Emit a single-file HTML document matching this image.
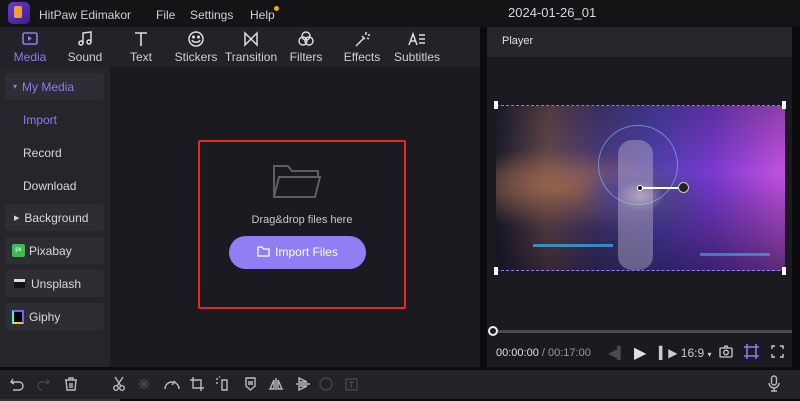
<!DOCTYPE html><html><head><style>
*{margin:0;padding:0;box-sizing:border-box}
body{width:800px;height:401px;overflow:hidden;background:#0b0b0d;font-family:"Liberation Sans",sans-serif;position:relative;color:#d8d8dc}
.a{position:absolute}
.tb span{font-size:12px;color:#cfcfd4}
.tool{position:absolute;top:30px;width:60px;text-align:center;font-size:12px;color:#d0d0d5}
.tool svg{display:block;margin:0 auto 2px;width:18px;height:18px}
.si{position:absolute;left:5px;width:99px;height:27px;border-radius:4px;background:#2d2d34;font-size:12px;color:#d8d8dc;display:flex;align-items:center}
.sl{position:absolute;left:23px;font-size:12px;color:#d8d8dc}
</style></head><body>
<div class="a" style="left:0;top:0;width:800px;height:27px;background:#141417"></div>
<div class="a" style="left:8px;top:2px;width:22px;height:22px;border-radius:5px;background:linear-gradient(135deg,#6a3ad8,#3a1f8a)"></div>
<div class="a" style="left:14px;top:6px;width:8px;height:12px;background:#f0a030;border-radius:2px"></div>
<div class="a tb" style="left:39px;top:6px"><span>HitPaw Edimakor</span></div>
<div class="a tb" style="left:156px;top:6px"><span>File</span></div>
<div class="a tb" style="left:190px;top:6px"><span>Settings</span></div>
<div class="a tb" style="left:250px;top:6px"><span>Help</span></div>
<div class="a" style="left:274px;top:6px;width:5px;height:5px;border-radius:50%;background:#f5a623"></div>
<div class="a" style="left:508px;top:5px;font-size:13px;color:#d8d8dc">2024-01-26_01</div>
<div class="a" style="left:0;top:27px;width:480px;height:39px;background:#222228"></div>
<div class="tool" style="left:0;color:#8e7cf0"><svg viewBox="0 0 18 18"><rect x="2" y="3" width="14" height="11" rx="1.5" fill="none" stroke="#8e7cf0" stroke-width="1.6"/><path d="M7 6l4 2.5-4 2.5z" fill="#8e7cf0"/></svg>Media</div>
<div class="tool" style="left:55px"><svg viewBox="0 0 18 18" fill="none" stroke="#ddd" stroke-width="1.5"><path d="M7 13V3l8-1v10"/><circle cx="5" cy="13" r="2"/><circle cx="13" cy="12" r="2"/></svg>Sound</div>
<div class="tool" style="left:111px"><svg viewBox="0 0 18 18" fill="none" stroke="#ddd" stroke-width="1.6"><path d="M3 3h12M9 3v13"/></svg>Text</div>
<div class="tool" style="left:166px"><svg viewBox="0 0 18 18" fill="none" stroke="#ddd" stroke-width="1.5"><circle cx="9" cy="9" r="7"/><path d="M5 10c1 3 7 3 8 0"/><circle cx="6.5" cy="7" r=".8"/><circle cx="11.5" cy="7" r=".8"/></svg>Stickers</div>
<div class="tool" style="left:221px"><svg viewBox="0 0 18 18" fill="none" stroke="#ddd" stroke-width="1.5"><path d="M3 3v12l12-12v12z"/></svg>Transition</div>
<div class="tool" style="left:276px"><svg viewBox="0 0 18 18" fill="none" stroke="#ddd" stroke-width="1.4"><circle cx="9" cy="6" r="4"/><circle cx="6" cy="11" r="4"/><circle cx="12" cy="11" r="4"/></svg>Filters</div>
<div class="tool" style="left:332px"><svg viewBox="0 0 18 18" fill="none" stroke="#ddd" stroke-width="1.5"><path d="M3 16l8-8M9 6l3 3M13 2v3M15 5h2M14 8l2 1"/></svg>Effects</div>
<div class="tool" style="left:387px"><svg viewBox="0 0 18 18" fill="none" stroke="#ddd" stroke-width="1.5"><path d="M1 15l4-11 4 11M2.5 11h5M11 5h6M11 9h6M11 13h6"/></svg>Subtitles</div>
<div class="a" style="left:0;top:66px;width:110px;height:301px;background:#25252b"></div>
<div class="a" style="left:110px;top:66px;width:370px;height:301px;background:#1a1a20"></div>
<div class="si" style="top:73px;color:#8e7cf0"><span style="font-size:8px;margin:0 5px 0 8px">▾</span>My Media</div>
<div class="sl" style="top:113px;color:#8e7cf0">Import</div>
<div class="sl" style="top:146px">Record</div>
<div class="sl" style="top:179px">Download</div>
<div class="si" style="top:204px"><span style="font-size:7px;margin:0 5px 0 9px">▶</span>Background</div>
<div class="si" style="top:237px"><span style="display:inline-block;width:13px;height:13px;background:#3fb950;border-radius:2px;margin:0 4px 0 7px;font-size:6px;line-height:13px;text-align:center;color:#fff">px</span>Pixabay</div>
<div class="si" style="top:270px"><span style="display:inline-block;width:11px;height:9px;background:#111;margin:0 6px 0 9px;border-top:3px solid #ddd"></span>Unsplash</div>
<div class="si" style="top:303px"><span style="display:inline-block;width:12px;height:14px;background:#000;border:2px solid #7c5cf0;border-left-color:#3fc;border-bottom-color:#f5d020;margin:0 5px 0 7px"></span>Giphy</div>
<div class="a" style="left:198px;top:140px;width:208px;height:169px;border:2px solid #e8281e;border-radius:2px"></div>
<svg class="a" style="left:272px;top:163px" width="50" height="38" viewBox="0 0 50 38" fill="none" stroke="#5e5e66" stroke-width="2"><path d="M2 34V3h14l4 5h26v6"/><path d="M2 34l5-20h41l-5 20z"/></svg>
<div class="a" style="left:198px;top:214px;width:208px;text-align:center;font-size:11px;color:#c8c8cc">Drag&amp;drop files here</div>
<div class="a" style="left:229px;top:236px;width:137px;height:33px;border-radius:17px;background:#8f7ef4;color:#fff;font-size:12px;line-height:33px;text-align:center"><svg width="13" height="11" viewBox="0 0 13 11" style="vertical-align:-1px;margin-right:5px" fill="none" stroke="#fff" stroke-width="1.3"><path d="M1 10V1h4l1.5 2H12v7z"/></svg>Import Files</div>
<div class="a" style="left:487px;top:27px;width:305px;height:340px;background:#1a1a20"></div>
<div class="a" style="left:487px;top:27px;width:305px;height:30px;background:#25252b;font-size:11px;line-height:28px;padding-left:15px;color:#e0e0e4">Player</div>
<div class="a" style="left:496px;top:106px;width:289px;height:165px;background:radial-gradient(ellipse at 50% 55%,#b8a8d0 0,#5a4a9a 12%,transparent 30%),radial-gradient(ellipse at 20% 50%,#a06a50 0,transparent 35%),linear-gradient(90deg,#1a1c2c 0,#6a4a4a 18%,#4a3a7a 35%,#5040b0 55%,#7a3ad0 75%,#c050e0 98%);"></div>
<div class="a" style="left:496px;top:106px;width:289px;height:165px;background:linear-gradient(180deg,rgba(20,20,40,.3),rgba(0,0,0,0) 40%,rgba(10,10,30,.55))"></div>
<div class="a" style="left:598px;top:125px;width:80px;height:80px;border:1.5px solid rgba(120,200,255,.6);border-radius:50%"></div>
<div class="a" style="left:618px;top:140px;width:35px;height:130px;background:rgba(200,190,210,.4);border-radius:14px"></div>
<div class="a" style="left:533px;top:244px;width:80px;height:3px;background:rgba(60,180,240,.7)"></div>
<div class="a" style="left:700px;top:253px;width:70px;height:3px;background:rgba(60,180,240,.6)"></div>
<div class="a" style="left:640px;top:187px;width:44px;height:1.5px;background:#fff"></div>
<div class="a" style="left:637px;top:185px;width:6px;height:6px;border-radius:50%;background:#111;border:1px solid #fff"></div>
<div class="a" style="left:678px;top:182px;width:11px;height:11px;border-radius:50%;background:#222;border:1px solid #ccc"></div>
<div class="a" style="left:496px;top:105px;width:289px;height:166px;border-top:1px dashed #8f7ef4;border-bottom:1px dashed #8f7ef4"></div>
<div class="a" style="left:494px;top:101px;width:4px;height:8px;background:#fff"></div>
<div class="a" style="left:782px;top:101px;width:4px;height:8px;background:#fff"></div>
<div class="a" style="left:494px;top:267px;width:4px;height:8px;background:#fff"></div>
<div class="a" style="left:782px;top:267px;width:4px;height:8px;background:#fff"></div>
<div class="a" style="left:493px;top:330px;width:299px;height:3px;background:#4a4a52"></div>
<div class="a" style="left:488px;top:326px;width:10px;height:10px;border-radius:50%;background:#1a1a20;border:2px solid #eee"></div>
<div class="a" style="left:496px;top:347px;font-size:11px;color:#9a9aa2"><span style="color:#e0e0e4">00:00:00</span> / 00:17:00</div>
<div class="a" style="left:608px;top:346px;font-size:12px;color:#4a4a52">◀▍</div>
<div class="a" style="left:634px;top:343px;font-size:16px;color:#e0e0e4">▶</div>
<div class="a" style="left:659px;top:346px;font-size:12px;color:#ccc">▍▶ 16:9 <span style="font-size:8px">▾</span></div>
<svg class="a" style="left:719px;top:345px" width="14" height="13" viewBox="0 0 14 13" fill="none" stroke="#ccc" stroke-width="1.3"><rect x="1" y="3" width="12" height="9" rx="1"/><circle cx="7" cy="7.5" r="2.3"/><path d="M5 3l1-2h2l1 2"/></svg>
<svg class="a" style="left:744px;top:344px" width="15" height="15" viewBox="0 0 15 15" fill="none" stroke="#8f7ef4" stroke-width="1.5"><rect x="3" y="3" width="9" height="9"/><path d="M3 0v3M0 3h3M12 0v3M15 3h-3M3 15v-3M0 12h3M12 15v-3M15 12h-3"/></svg>
<svg class="a" style="left:771px;top:345px" width="13" height="13" viewBox="0 0 13 13" fill="none" stroke="#ccc" stroke-width="1.4"><path d="M1 4V1h3M9 1h3v3M12 9v3H9M4 12H1V9"/></svg>
<div class="a" style="left:0;top:370px;width:800px;height:29px;background:#222228"></div>
<div class="a" style="left:0;top:399px;width:120px;height:2px;background:#333"></div>
<svg class="a" style="left:10px;top:376px" width="380" height="16" viewBox="0 0 380 16" fill="none" stroke="#bbb" stroke-width="1.4">
<path d="M3 3L1 6l3 2M1 6h8a4 4 0 010 8H3"/>
<path d="M37 3l2 3-3 2M39 6h-7a4 4 0 000 8" stroke="#444"/>
<path d="M55 4h12M59 4V2h4v2M56 4l1 10h8l1-10M60 7v5M62 7v5"/>
<circle cx="106" cy="12" r="2.3"/><circle cx="112" cy="12" r="2.3"/><path d="M107 10l6-9M111 10l-6-9"/>
<path d="M134 2v12M128 8h12M130 4l8 8M138 4l-8 8" stroke="#444"/>
<path d="M155 13a7 7 0 1114 0M162 9l3-4"/>
<path d="M183 1v11h11M180 4h11v11"/>
<path d="M207 2v2M207 6v2M209 1h1M212 4h5v10h-5z"/>
<path d="M236 2h9v8l-4.5 4-4.5-4zM238 6h5M238 8h5"/>
<path d="M266 2v12M264 4l-4 9h4zM268 4l4 9h-4z"/>
<path d="M286 8h14M289 2l8 4h-8zM289 14l8-4h-8z"/>
<circle cx="316" cy="8" r="6" stroke="#444"/><path d="M336 3h11v11h-11zM339 6h5M341.5 6v6" stroke="#444"/>
</svg>
<svg class="a" style="left:768px;top:375px" width="12" height="17" viewBox="0 0 12 17" fill="none" stroke="#bbb" stroke-width="1.4"><rect x="3.5" y="1" width="5" height="9" rx="2.5"/><path d="M1 8a5 5 0 0010 0M6 13v3M3 16h6"/></svg>
</body></html>
